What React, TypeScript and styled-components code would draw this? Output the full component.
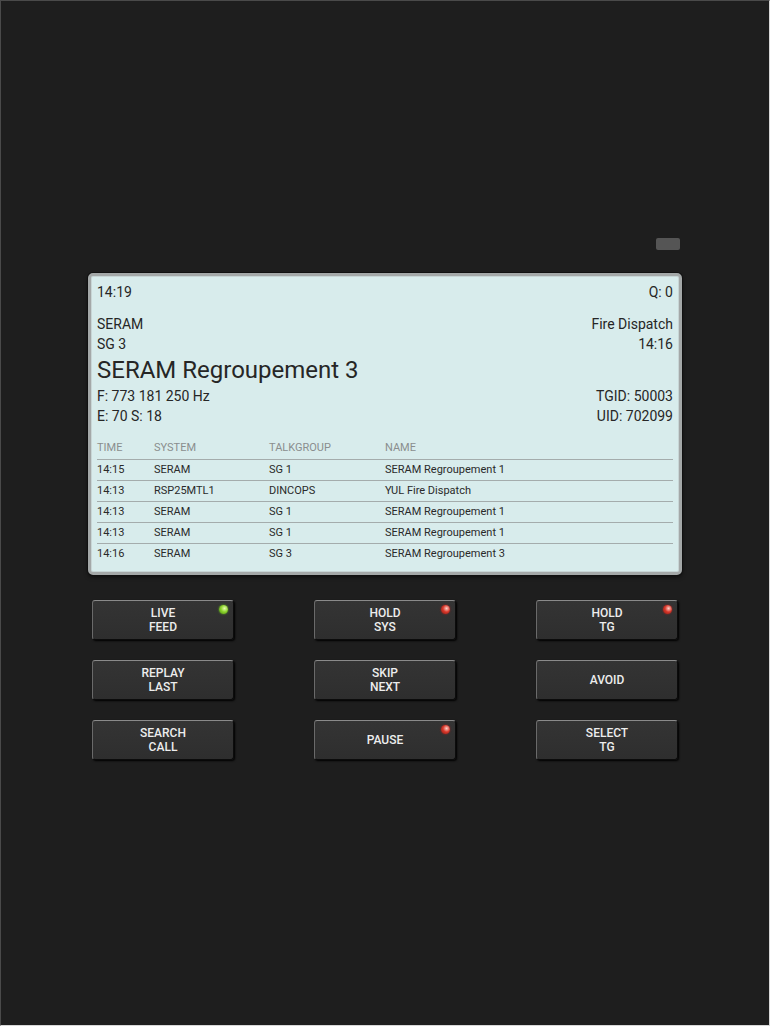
import styled, { createGlobalStyle } from "styled-components";

type Led = "green" | "red" | null;

const Global = createGlobalStyle`
  html, body {
    margin: 0;
    padding: 0;
    background: #1e1e1e;
  }
  * { box-sizing: border-box; }
`;

const Page = styled.div`
  width: 770px;
  height: 1026px;
  background: #1e1e1e;
  border-top: 1px solid #4a4a4a;
  border-left: 1px solid #4a4a4a;
  border-right: 1px solid #d8d8d8;
  border-bottom: 1px solid #d8d8d8;
  font-family: Roboto, "Liberation Sans", sans-serif;
  display: flex;
  flex-direction: column;
  align-items: center;
  padding-top: 236px;
`;

const Unit = styled.div`
  width: 594px;
  display: flex;
  flex-direction: column;
`;

const TopBar = styled.div`
  display: flex;
  justify-content: flex-end;
  padding-right: 2px;
  height: 36px;
`;

const Indicator = styled.div`
  width: 24px;
  height: 12px;
  margin-top: 1px;
  border-radius: 2px;
  background: #555;
`;

const Screen = styled.div`
  background: #d8ecec;
  border: 3px solid #a4a8a8;
  border-radius: 5px;
  box-shadow: 0 0 0 1px #111, inset 0 0 0 1px #c8d6d6, 0 2px 4px rgba(0, 0, 0, 0.6);
  padding: 6px 6px 8px 6px;
  color: #262626;
`;

const Line = styled.div<{ $gap?: number }>`
  display: flex;
  justify-content: space-between;
  font-size: 14px;
  line-height: 20px;
  margin-top: ${(p) => p.$gap ?? 0}px;
`;

const Title = styled.div`
  font-size: 24px;
  line-height: 32px;
`;

const Table = styled.table`
  width: 100%;
  border-collapse: collapse;
  margin-top: 10px;
  font-size: 11px;
`;

const Th = styled.th<{ $w?: number }>`
  text-align: left;
  font-weight: 400;
  color: #8a8e8e;
  height: 23px;
  padding: 0;
  padding-top: 1px;
  width: ${(p) => (p.$w ? `${p.$w}px` : "auto")};
  border-bottom: 1px solid #a4acac;
`;

const Tr = styled.tr`
  & + & td {
    border-top: 1px solid #a4acac;
  }
`;

const Td = styled.td`
  padding: 0;
  height: 21px;
  color: #2a2a2a;
`;

const Pad = styled.div`
  display: grid;
  grid-template-columns: repeat(3, 142px);
  justify-content: space-between;
  row-gap: 20px;
  margin-top: 25px;
  padding: 0 4px 0 4px;
`;

const Key = styled.button`
  position: relative;
  height: 40px;
  background: linear-gradient(#343434 0%, #2e2e2e 100%);
  border: 1px solid #0c0c0c;
  border-top-color: #8a8a8a;
  border-left-color: #6a6a6a;
  border-radius: 3px;
  box-shadow: 1px 1px 2px #000;
  color: #ededed;
  font-family: Roboto, "Liberation Sans", sans-serif;
  font-weight: 500;
  font-size: 12px;
  line-height: 14px;
  padding: 0 0 1px;
  display: flex;
  align-items: center;
  justify-content: center;
  text-align: center;
  white-space: pre-line;
`;

const Lamp = styled.span<{ $color: "green" | "red" }>`
  position: absolute;
  top: 4px;
  right: 5px;
  width: 9px;
  height: 9px;
  border-radius: 50%;
  background: ${(p) =>
    p.$color === "green"
      ? "radial-gradient(circle at 62% 38%, #e8ffb0 0, #8ad22a 45%, #4d8c12 100%)"
      : "radial-gradient(circle at 62% 38%, #ffd0c8 0, #d8372a 45%, #8a1a12 100%)"};
  box-shadow: 0 0 2px ${(p) => (p.$color === "green" ? "#6b2" : "#a22")};
`;

const history = [
  ["14:15", "SERAM", "SG 1", "SERAM Regroupement 1"],
  ["14:13", "RSP25MTL1", "DINCOPS", "YUL Fire Dispatch"],
  ["14:13", "SERAM", "SG 1", "SERAM Regroupement 1"],
  ["14:13", "SERAM", "SG 1", "SERAM Regroupement 1"],
  ["14:16", "SERAM", "SG 3", "SERAM Regroupement 3"],
];

const keys: { label: string; led: Led }[] = [
  { label: "LIVE\nFEED", led: "green" },
  { label: "HOLD\nSYS", led: "red" },
  { label: "HOLD\nTG", led: "red" },
  { label: "REPLAY\nLAST", led: null },
  { label: "SKIP\nNEXT", led: null },
  { label: "AVOID", led: null },
  { label: "SEARCH\nCALL", led: null },
  { label: "PAUSE", led: "red" },
  { label: "SELECT\nTG", led: null },
];

export default function App() {
  return (
    <Page>
      <Global />
      <Unit>
        <TopBar>
          <Indicator />
        </TopBar>
        <Screen>
          <Line>
            <span>14:19</span>
            <span>Q: 0</span>
          </Line>
          <Line $gap={12}>
            <span>SERAM</span>
            <span>Fire Dispatch</span>
          </Line>
          <Line>
            <span>SG 3</span>
            <span>14:16</span>
          </Line>
          <Title>SERAM Regroupement 3</Title>
          <Line>
            <span>F: 773 181 250 Hz</span>
            <span>TGID: 50003</span>
          </Line>
          <Line>
            <span>E: 70 S: 18</span>
            <span>UID: 702099</span>
          </Line>
          <Table>
            <thead>
              <tr>
                <Th $w={57}>TIME</Th>
                <Th $w={115}>SYSTEM</Th>
                <Th $w={116}>TALKGROUP</Th>
                <Th>NAME</Th>
              </tr>
            </thead>
            <tbody>
              {history.map((r, i) => (
                <Tr key={i}>
                  {r.map((c, j) => (
                    <Td key={j}>{c}</Td>
                  ))}
                </Tr>
              ))}
            </tbody>
          </Table>
        </Screen>
        <Pad>
          {keys.map((k) => (
            <Key key={k.label}>
              {k.label}
              {k.led && <Lamp $color={k.led} />}
            </Key>
          ))}
        </Pad>
      </Unit>
    </Page>
  );
}
